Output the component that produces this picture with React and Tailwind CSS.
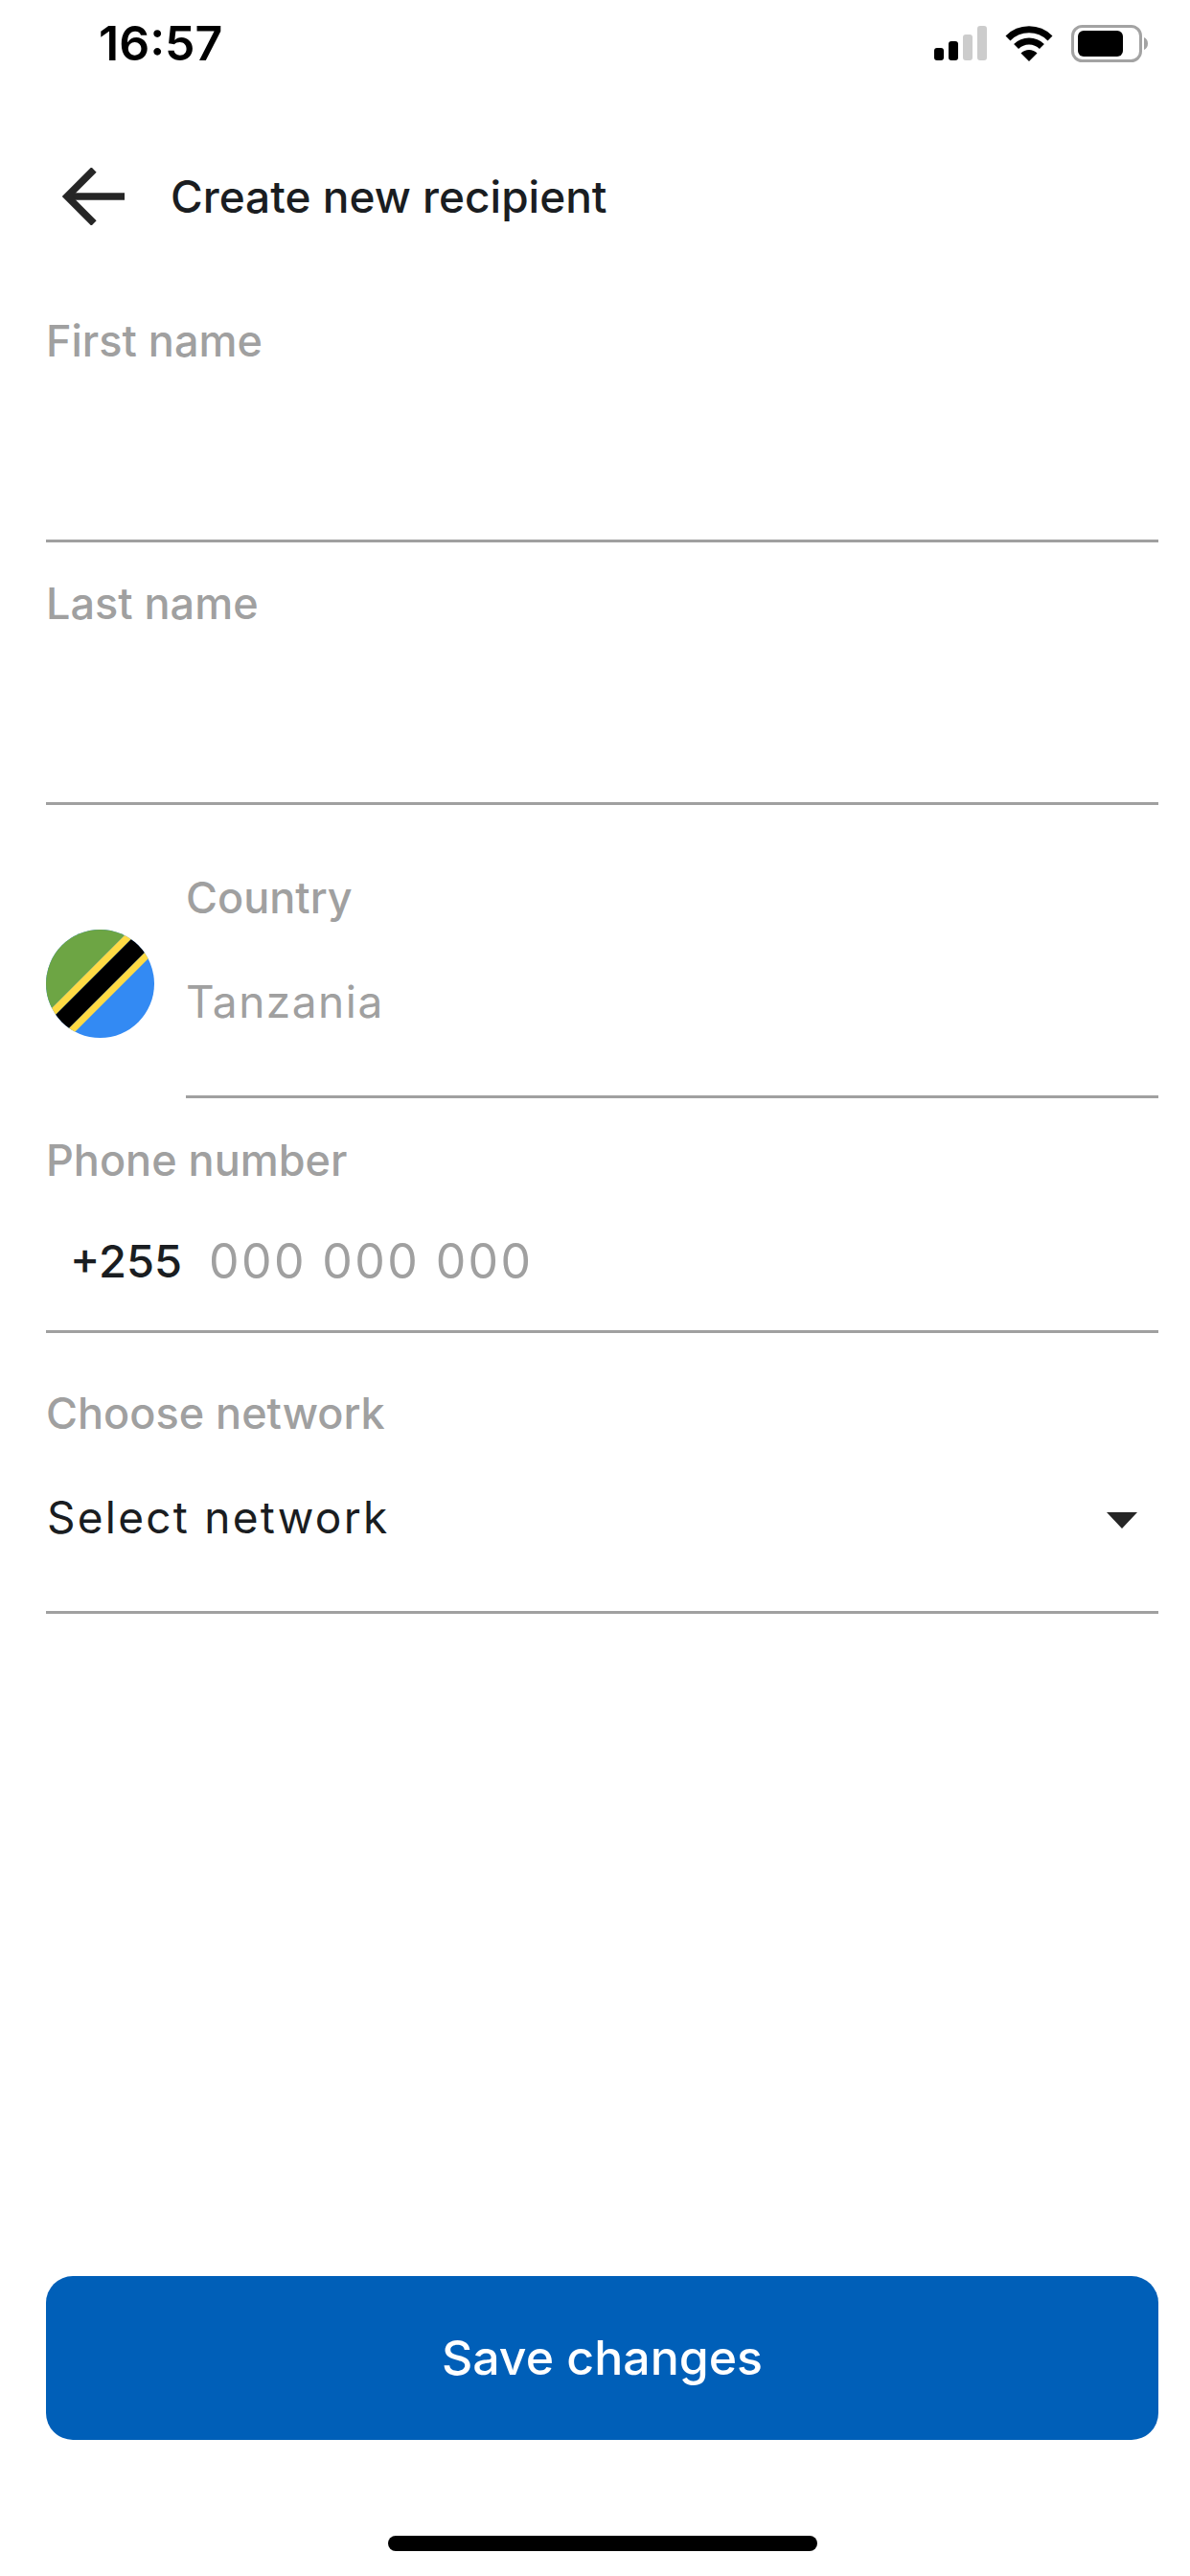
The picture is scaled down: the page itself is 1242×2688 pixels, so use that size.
import React from "react";

const FONT = "font-['Inter','Liberation_Sans',sans-serif]";

const Signal = () => (
  <svg width="55" height="36" viewBox="0 0 55 36">
    <rect x="0" y="23" width="10" height="13" rx="3" fill="#000" />
    <rect x="15" y="16" width="10" height="20" rx="3" fill="#000" />
    <rect x="30" y="9" width="10" height="27" rx="3" fill="#ccc" />
    <rect x="45" y="0" width="10" height="36" rx="3" fill="#ccc" />
  </svg>
);

const Wifi = () => (
  <svg width="52" height="38" viewBox="0 0 52 38" fill="none">
    <path d="M4 14A31 31 0 0 1 48 14" stroke="#000" strokeWidth="7" />
    <path d="M12.6 22.6A19 19 0 0 1 39.4 22.6" stroke="#000" strokeWidth="7" />
    <path d="M26 38L17.5 29.5A12 12 0 0 1 34.5 29.5Z" fill="#000" />
  </svg>
);

const Battery = () => (
  <svg width="80" height="39" viewBox="0 0 80 39" fill="none">
    <rect x="1.5" y="1.5" width="71" height="36" rx="10" stroke="#a3a3a3" strokeWidth="3" />
    <rect x="7" y="6" width="47" height="27" rx="6" fill="#000" />
    <path d="M76 13C78.5 14 80 16.500 80 19.500C80 22.500 78.500 25 76 26Z" fill="#a3a3a3" />
  </svg>
);

const TanzaniaFlag = () => (
  <svg width="113" height="113" viewBox="0 0 113 113" className="shrink-0">
    <defs>
      <clipPath id="flag-circle">
        <circle cx="56.500" cy="56.500" r="56.500" />
      </clipPath>
    </defs>
    <g clipPath="url(#flag-circle)">
      <rect width="113" height="113" fill="#338af3" />
      <path d="M0 0H88L0 88Z" fill="#6da544" />
      <path d="M88 0H99L0 99V88Z" fill="#ffda44" />
      <path d="M99 0H113V14L14 113H0V99Z" fill="#000" />
      <path d="M113 14V24L24 113H14Z" fill="#ffda44" />
    </g>
  </svg>
);

const Label = ({ children }) => (
  <div className="h-[60px] text-[45px] font-medium leading-[60px] text-[#a0a0a0]">{children}</div>
);

const App = () => {
  return (
    <div className={`${FONT} flex h-[2688px] w-[1242px] flex-col bg-white text-[#1a1d21]`}>
      {/* status bar */}
      <div className="flex h-[90px] items-center justify-between pl-[103px] pr-[44px]">
        <span className="text-[50px] font-semibold leading-none text-black">16:57</span>
        <div className="flex items-center gap-[18px]">
          <Signal />
          <Wifi />
          <Battery />
        </div>
      </div>

      {/* header */}
      <div className="flex h-[230px] items-center pl-[65px]">
        <svg width="66" height="60" viewBox="0 0 66 60" fill="none" stroke="#262626" strokeWidth="7.500">
          <path d="M65 30H5" />
          <path d="M33 2L5 30L33 58" />
        </svg>
        <span className="ml-[47px] text-[46px] font-medium leading-none">Create new recipient</span>
      </div>

      <div className="flex flex-1 flex-col pl-[48px] pr-[33px]">
        <div className="pt-[6px]">
          <Label>First name</Label>
          <div className="h-[180px] border-b-[3px] border-[#a0a0a0]" />
        </div>
        <div className="pt-[34px]">
          <Label>Last name</Label>
          <div className="h-[180px] border-b-[3px] border-[#a0a0a0]" />
        </div>

        <div className="mt-[67px] flex items-center gap-[33px]">
          <TanzaniaFlag />
          <div className="flex-1">
            <Label>Country</Label>
            <div className="h-[179px] border-b-[3px] border-[#a0a0a0] pt-[48px] text-[46px] leading-[60px] tracking-[1.500px] text-[#a0a0a0]">
              Tanzania
            </div>
          </div>
        </div>

        <div className="pt-[35px]">
          <Label>Phone number</Label>
          <div className="flex h-[150px] items-center border-b-[3px] border-[#a0a0a0] pl-[25px] pt-[4px]">
            <span className="text-[47px] font-medium">+255</span>
            <span className="ml-[28px] text-[50px] tracking-[2.400px] text-[#a0a0a0]">000 000 000</span>
          </div>
        </div>

        <div className="pt-[54px]">
          <Label>Choose network</Label>
          <div className="flex h-[179px] items-start justify-between border-b-[3px] border-[#a0a0a0] pt-[48px]">
            <span className="ml-[1px] text-[46px] leading-[60px] tracking-[2.250px]">Select network</span>
            <svg width="32" height="17" viewBox="0 0 32 17" className="mr-[22px] mt-[25px]">
              <path d="M0 0H32L16 17Z" fill="#262626" />
            </svg>
          </div>
        </div>

        <button className="mt-auto flex h-[171px] w-full items-center justify-center rounded-[28px] bg-[#005fb8] text-[50px] font-medium text-white">
          Save changes
        </button>

        {/* home indicator */}
        <div className="flex h-[142px] justify-center pt-[100px]">
          <div className="h-[16px] w-[448px] rounded-full bg-black" />
        </div>
      </div>
    </div>
  );
};

export default App;
